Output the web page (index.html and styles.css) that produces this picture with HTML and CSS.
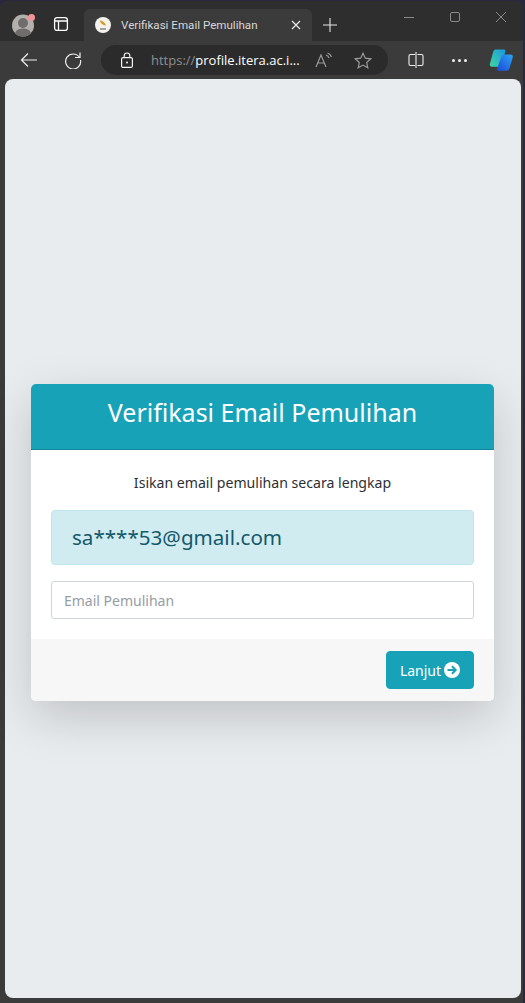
FILE: index.html
```html
<!DOCTYPE html>
<html lang="id">
<head>
<meta charset="utf-8">
<title>Verifikasi Email Pemulihan</title>
<link rel="stylesheet" href="styles.css">
</head>
<body>
<div class="window">
  <div class="titlebar">
    <div class="profile">
      <svg width="24" height="24" viewBox="0 0 24 24"><circle cx="12" cy="12.500" r="11" fill="#b3b0ad"/><circle cx="12" cy="10" r="5" fill="#6f6e6c"/><path d="M4 20c1.500-3.500 4.500-4.500 8-4.500s6.500 1 8 4.500c-2 2.400-4.800 3.800-8 3.800s-6-1.400-8-3.800z" fill="#6f6e6c"/><circle cx="20.500" cy="4.500" r="3.500" fill="#f1949a"/></svg>
    </div>
    <div class="tabs-btn">
      <svg width="16" height="16" viewBox="0 0 16 16" fill="none" stroke="#fff" stroke-width="1.300"><rect x="1.600" y="1.600" width="12.800" height="12.800" rx="2.500"/><path d="M1.600 5h12.800M5.500 5v9.400"/></svg>
    </div>
    <div class="tab">
      <svg class="favicon" width="16" height="16" viewBox="0 0 16 16"><circle cx="8" cy="8" r="8" fill="#f4f2ec"/><path d="M4.500 3.500c3 0 5.500 2 6.500 5-2.500 0-5-1.500-6.500-5z" fill="#d29a1e"/><path d="M5 12h6" stroke="#555" stroke-width="1"/></svg>
      <span class="tab-title">Verifikasi Email Pemulihan</span>
      <svg class="tab-close" width="10" height="10" viewBox="0 0 10 10" stroke="#e8e8e8" stroke-width="1.200"><path d="M1 1l8 8M9 1l-8 8"/></svg>
    </div>
    <svg class="new-tab" width="16" height="16" viewBox="0 0 16 16" stroke="#e6e6e6" stroke-width="1.100"><path d="M8 1v14M1 8h14"/></svg>
    <div class="caption">
      <svg width="12" height="12" viewBox="0 0 12 12" stroke="#8a8a8a"><path d="M1 6.500h10"/></svg>
      <svg width="12" height="12" viewBox="0 0 12 12" fill="none" stroke="#8a8a8a"><rect x="1.500" y="1.500" width="9" height="9" rx="1.500"/></svg>
      <svg width="12" height="12" viewBox="0 0 12 12" stroke="#8a8a8a"><path d="M1 1l10 10M11 1L1 11"/></svg>
    </div>
  </div>
  <div class="toolbar">
    <svg class="tool back" width="18" height="16" viewBox="0 0 18 16" fill="none" stroke="#f0f0f0" stroke-width="1.200"><path d="M17 8H1.500M8 1.500L1.500 8 8 14.500"/></svg>
    <svg class="tool reload" width="18" height="18" viewBox="0 0 18 18" fill="none" stroke="#f0f0f0" stroke-width="1.200"><path d="M15.500 6.500A7.500 7.500 0 1 0 16.500 9"/><path d="M16 1.500v5h-5"/></svg>
    <div class="address">
      <svg class="lock" width="14" height="16" viewBox="0 0 14 16" fill="none" stroke="#f5f5f5" stroke-width="1.200"><rect x="1.600" y="5.600" width="10.800" height="9.800" rx="1.500"/><path d="M4.200 5.500V3.800a2.800 2.800 0 0 1 5.600 0v1.700"/><circle cx="7" cy="10.500" r="1" fill="#f5f5f5" stroke="none"/></svg>
      <span class="url"><span class="url-dim">https://</span>profile.itera.ac.i...</span>
      <svg class="read" width="17" height="16" viewBox="0 0 17 16" fill="none" stroke="#9a9a9a" stroke-width="1.200"><path d="M1 15L6 3l5 12M3 11h6"/><path d="M11 3c1.500.5 2.500 1.500 3 3M12.500 1c2 .7 3.300 2 4 4"/></svg>
      <svg class="star" width="18" height="17" viewBox="0 0 18 17" fill="none" stroke="#9a9a9a" stroke-width="1.200"><path d="M9 1.200l2.300 5 5.400.6-4 3.700 1.100 5.300L9 13.100l-4.800 2.700 1.100-5.300-4-3.700 5.400-.6z"/></svg>
    </div>
    <svg class="split" width="16" height="16" viewBox="0 0 16 16" fill="none" stroke="#f0f0f0" stroke-width="1.100"><path d="M7 2.500H2.500a1.500 1.500 0 0 0-1.500 1.500v8a1.500 1.500 0 0 0 1.500 1.500H7M9.500 2.500h4A1.500 1.500 0 0 1 15 4v8a1.500 1.500 0 0 1-1.500 1.500h-4M8 0v16"/></svg>
    <div class="more"><i></i><i></i><i></i></div>
    <svg class="copilot" width="25" height="25" viewBox="0 0 25 25"><defs><linearGradient id="cpa" x1="0" y1="1" x2="1" y2="0"><stop offset="0" stop-color="#3fd6a0"/><stop offset="1" stop-color="#1a9ae0"/></linearGradient><linearGradient id="cpb" x1="0" y1="1" x2="1" y2="0"><stop offset="0" stop-color="#1d48d8"/><stop offset="1" stop-color="#2aa6f5"/></linearGradient></defs><path d="M6.500 1.500h8.500c1.200 0 1.800.8 1.400 1.900L12 17c-.4 1.200-1.300 1.700-2.400 1.700H3c-1.700 0-2.600-1.300-2.100-2.900L4.200 4c.4-1.500 1.100-2.500 2.300-2.500z" fill="url(#cpa)"/><path d="M15 6.500h6.500c1.800 0 2.700 1.300 2.200 2.900l-3.200 10.900c-.5 1.600-1.400 2.400-2.700 2.400H9.500c-1.200 0-1.800-.8-1.400-1.900L12.500 8c.4-1 1.300-1.500 2.500-1.500z" fill="url(#cpb)"/></svg>
  </div>
  <main class="viewport">
    <section class="card">
      <header class="card-header">Verifikasi Email Pemulihan</header>
      <div class="card-body">
        <p class="hint">Isikan email pemulihan secara lengkap</p>
        <div class="alert">sa****53@gmail.com</div>
        <input class="field" type="text" placeholder="Email Pemulihan">
      </div>
      <footer class="card-footer">
        <button class="btn" type="button">Lanjut
          <svg width="16" height="16" viewBox="0 0 16 16"><circle cx="8" cy="8" r="8" fill="#fff"/><path d="M3.500 8h8M8 4.300L11.700 8 8 11.700" fill="none" stroke="#17a2b8" stroke-width="2"/></svg>
        </button>
      </footer>
    </section>
  </main>
</div>
</body>
</html>
```
FILE: styles.css
```css
* { box-sizing: border-box; }
html, body { margin: 0; height: 100%; }
body { background: #2a2740; overflow: hidden; }
.window {
  height: 1002px;
  margin: 1px 2px 0 0;
  padding-bottom: 5px;
  background: #3b3b3b;
  border-radius: 8px 8px 0 0;
  display: flex;
  flex-direction: column;
}
.titlebar {
  height: 40px;
  flex: none;
  background: #2e2e2e;
  display: flex;
  align-items: flex-end;
  border-radius: 8px 8px 0 0;
}
.profile { width: 24px; height: 24px; margin: 0 0 4px 11px; flex: none; }
.tabs-btn { width: 16px; height: 16px; margin: 0 0 9px 18px; flex: none; }
.tab {
  width: 228px;
  height: 32px;
  margin-left: 15px;
  padding: 0 11px;
  background: #3b3b3b;
  border-radius: 6px 6px 0 0;
  display: flex;
  align-items: center;
  flex: none;
}
.tab-title {
  margin-left: 10px;
  flex: 1;
  color: #d8d8d8;
  font: 11.6px Roboto, sans-serif;
  white-space: nowrap;
}
.tab-close { flex: none; }
.new-tab { flex: none; margin: 0 0 8px 10px; }
.caption {
  margin: 0 16px 18px auto;
  display: flex;
  gap: 34px;
  align-self: flex-end;
}
.toolbar {
  height: 38px;
  flex: none;
  background: #3b3b3b;
  display: flex;
  align-items: center;
}
.back { margin-left: 20px; flex: none; }
.reload { margin-left: 26px; flex: none; }
.address {
  width: 287px;
  height: 30px;
  margin-left: 19px;
  padding: 0 16px 0 19px;
  flex: none;
  background: #2b2b2b;
  border-radius: 15px;
  display: flex;
  align-items: center;
}
.lock { flex: none; }
.url {
  margin-left: 17px;
  flex: 1;
  color: #fff;
  font: 13px "Open Sans", sans-serif;
  white-space: nowrap;
  overflow: hidden;
}
.url-dim { color: #8f8f8f; }
.read { flex: none; margin-right: 22px; }
.star { flex: none; }
.split { margin-left: 20px; flex: none; }
.more { margin-left: 28px; display: flex; gap: 3px; flex: none; }
.more i { width: 3px; height: 3px; border-radius: 50%; background: #f0f0f0; }
.copilot { margin-left: 22px; flex: none; }
.viewport {
  flex: 1;
  margin: 0 2px 0 5px;
  padding: 8px 27px 0 26px;
  background: #e9ecef;
  border-radius: 8px;
  display: flex;
  align-items: center;
}
.card {
  width: 463px;
  background: #fff;
  border-radius: 5px;
  overflow: hidden;
  box-shadow: 0 16px 48px rgba(0,0,0,.175);
  font-family: "Noto Sans", sans-serif;
}
.card-header {
  height: 66px;
  background: #17a2b8;
  border-bottom: 1px solid #138496;
  color: #fff;
  font-size: 25px;
  line-height: 56px;
  text-align: center;
}
.card-body { padding: 20px; height: 189px; }
.hint {
  margin: 0 0 16px;
  height: 24px;
  color: #2b3036;
  font-size: 14.1px;
  line-height: 26px;
  text-align: center;
}
.alert {
  height: 55px;
  margin-bottom: 16px;
  padding: 0 20px;
  background: #d1ecf1;
  border: 1px solid #bee5eb;
  border-radius: 4px;
  color: #14596a;
  font-size: 20.6px;
  line-height: 52px;
}
.field {
  display: block;
  width: 100%;
  height: 38px;
  padding: 0 12px;
  border: 1px solid #ced4da;
  border-radius: 3px;
  font: 14px "Noto Sans", sans-serif;
  color: #495057;
}
.field::placeholder { color: #969da4; opacity: 1; }
.card-footer {
  height: 62px;
  padding: 12px 20px;
  background: #f7f7f7;
  display: flex;
  justify-content: flex-end;
}
.btn {
  width: 88px;
  height: 38px;
  padding: 0;
  background: #17a2b8;
  border: 1px solid #17a2b8;
  border-radius: 4px;
  color: #fff;
  font: 14px "Noto Sans", sans-serif;
  display: flex;
  align-items: center;
  justify-content: center;
  gap: 3px;
}
```
